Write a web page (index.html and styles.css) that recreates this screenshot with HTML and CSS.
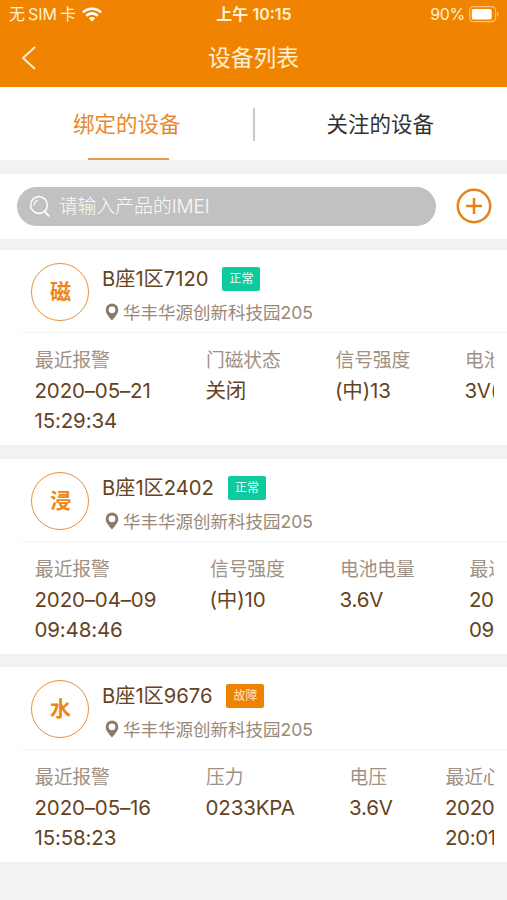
FILE: index.html
```html
<!DOCTYPE html>
<html lang="zh-CN">
<head>
<meta charset="utf-8">
<title>设备列表</title>
<link rel="stylesheet" href="styles.css">
</head>
<body>
<svg class="defs" width="0" height="0"><symbol id="pin" viewBox="0 0 14 18"><path fill-rule="evenodd" d="M7 .5a6.3 6.3 0 0 0-6.3 6.3C.7 11 4.2 14 7 17.5 9.800 14 13.300 11 13.300 6.800A6.300 6.300 0 0 0 7 .5zm0 2.900a3.400 3.400 0 1 1 0 6.800 3.400 3.400 0 0 1 0-6.800z"/></symbol></svg>
<header class="header">
  <div class="status">
    <div class="carrier"><span class="carrier-name">无<span class="sim">SIM</span>卡</span>
      <svg class="wifi" width="20" height="15" viewBox="0 0 20 15"><g fill="none" stroke="currentColor" stroke-width="2.700"><path d="M1 5.400C6 .5 14 .5 19 5.400"/><path d="M4.300 8.700c3.300-3 8.100-3 11.400 0"/></g><path fill="currentColor" d="M6.800 11.200c1.900-1.600 4.500-1.600 6.400 0L10 14.400z"/></svg>
    </div>
    <div class="time">上午<span>10:15</span></div>
    <div class="power"><span>90%</span>
      <svg width="30" height="17" viewBox="0 0 33 17" preserveAspectRatio="none"><rect x=".7" y=".7" width="28.600" height="15" rx="4.200" fill="none" stroke="#f9c27d" stroke-width="1.200"/><rect x="3" y="3" width="22" height="10.500" rx="2" fill="#fff"/><path d="M31 5.700v5c2-.8 2-4.200 0-5z" fill="#f9c27d"/></svg>
    </div>
  </div>
  <div class="nav">
    <svg class="back" width="16" height="24" viewBox="0 0 16 24"><path d="M14 1 2 12l12 11" fill="none" stroke="currentColor" stroke-width="1.900"/></svg>
    <h1>设备列表</h1>
  </div>
</header>
<nav class="tabs">
  <a class="tab active">绑定的设备</a>
  <a class="tab">关注的设备</a>
</nav>
<section class="search">
  <div class="field">
    <svg width="22" height="23" viewBox="0 0 22 23" fill="none" stroke="currentColor" stroke-width="1.600"><circle cx="10" cy="10" r="8.400"/><path d="m15.800 16.400 4.200 5" stroke-width="2"/><path d="M5 10.500A5.500 5.500 0 0 1 9 5.300" stroke-width="1.200"/></svg>
    <span>请输入产品的IMEI</span>
  </div>
  <svg class="add" width="36" height="36" viewBox="0 0 36 36" fill="none" stroke="currentColor" stroke-width="2.500"><circle cx="18" cy="18" r="16.200"/><path d="M10 18h16M18 10v16"/></svg>
</section>
<main class="list">
  <article class="card magnet">
    <div class="top">
      <div class="avatar">磁</div>
      <div class="info">
        <div class="name"><span>B座1区7120</span><b class="tag">正常</b></div>
        <div class="addr"><svg width="14" height="18"><use href="#pin"/></svg><span>华丰华源创新科技园205</span></div>
      </div>
    </div>
    <div class="stats">
      <dl><dt>最近报警</dt><dd>2020–05–21<br>15:29:34</dd></dl>
      <dl><dt>门磁状态</dt><dd>关闭</dd></dl>
      <dl><dt>信号强度</dt><dd>(中)13</dd></dl>
      <dl><dt>电池</dt><dd>3V(</dd></dl>
    </div>
  </article>
  <article class="card flood">
    <div class="top">
      <div class="avatar">浸</div>
      <div class="info">
        <div class="name"><span>B座1区2402</span><b class="tag">正常</b></div>
        <div class="addr"><svg width="14" height="18"><use href="#pin"/></svg><span>华丰华源创新科技园205</span></div>
      </div>
    </div>
    <div class="stats">
      <dl><dt>最近报警</dt><dd>2020–04–09<br>09:48:46</dd></dl>
      <dl><dt>信号强度</dt><dd>(中)10</dd></dl>
      <dl><dt>电池电量</dt><dd>3.6V</dd></dl>
      <dl><dt>最近</dt><dd>20<br>09</dd></dl>
    </div>
  </article>
  <article class="card water">
    <div class="top">
      <div class="avatar">水</div>
      <div class="info">
        <div class="name"><span>B座1区9676</span><b class="tag fault">故障</b></div>
        <div class="addr"><svg width="14" height="18"><use href="#pin"/></svg><span>华丰华源创新科技园205</span></div>
      </div>
    </div>
    <div class="stats">
      <dl><dt>最近报警</dt><dd>2020–05–16<br>15:58:23</dd></dl>
      <dl><dt>压力</dt><dd>0233KPA</dd></dl>
      <dl><dt>电压</dt><dd>3.6V</dd></dl>
      <dl><dt>最近心</dt><dd>2020<br>20:01</dd></dl>
    </div>
  </article>
</main>
</body>
</html>
```
FILE: styles.css
```css
* { box-sizing: border-box; margin: 0; padding: 0; }
body { width: 507px; height: 900px; overflow: hidden; background: #f2f2f2; font-family: Inter, "Noto Sans CJK SC", sans-serif; }
svg { display: block; flex: none; }
.defs { position: absolute; }
.header { height: 87px; background: #f08400; color: #fff0d2; }
.status { height: 29px; display: grid; grid-template-columns: 1fr auto 1fr; align-items: center; padding: 0 8px 0 9px; font-size: 16px; line-height: 29px; white-space: nowrap; }
.carrier { display: flex; align-items: center; gap: 6px; }
.carrier svg, .power svg { margin-top: -1px; }
.sim { margin: 0 3px; }
.wifi { color: #fff; }
.time { font-weight: 600; font-size: 16px; }
.time span { margin-left: 4px; }
.power { display: flex; justify-content: flex-end; align-items: center; gap: 4px; letter-spacing: -.3px; }
.nav { height: 57px; display: grid; grid-template-columns: 1fr auto 1fr; align-items: center; padding: 0 0 0 21px; }
.nav h1 { margin-left: -21px; font-size: 22.800px; font-weight: 400; line-height: 57px; }
.tabs { height: 73px; display: grid; grid-template-columns: 1fr 1fr; background: #fff; }
.tab { display: flex; justify-content: center; position: relative; height: 73px; font-size: 21.500px; line-height: 75px; color: #333; }
.tab.active { color: #e58a2c; }
.tab.active::before { content: ""; position: absolute; right: -1px; top: 21px; width: 1.500px; height: 33px; background: #c9c9c9; }
.tab.active::after { content: ""; position: absolute; left: 88px; bottom: 0; width: 81px; height: 2px; background: #e79a4b; }
.search { height: 65px; margin: 14px 0 11px; padding: 0 15px 1px 17px; background: #fff; display: flex; align-items: center; justify-content: space-between; }
.field { width: 419px; height: 39px; border-radius: 20px; background: #c1c1c1; color: #fafafa; display: flex; align-items: center; gap: 8px; padding-left: 12px; font-size: 18.800px; }
.field span { line-height: 40px; height: 39px; font-weight: 300; }
.add { color: #e38419; }
.list { display: grid; gap: 13.500px; }
.card { height: 195px; background: #fff; }
.top { height: 83px; margin-left: 20px; padding-left: 11px; border-bottom: 1px solid #f5f5f5; display: flex; }
.avatar { width: 58px; height: 58px; margin-top: 13px; border: 1.500px solid #e89238; border-radius: 50%; color: #ed8616; font-size: 21px; font-weight: 700; line-height: 56px; text-align: center; padding-left: 1px; }
.info { margin-left: 13px; padding-top: 12px; }
.name { height: 34px; display: flex; align-items: center; gap: 14px; color: #65431f; font-size: 20.200px; line-height: 34px; }
.tag { width: 38px; height: 24px; border-radius: 2px; background: #0ecb9f; color: #edfff8; font-size: 12px; font-weight: 400; line-height: 24px; text-align: center; }
.tag.fault { background: #ef8200; color: #ffe8c6; }
.addr { height: 34px; margin-left: 3px; display: flex; align-items: center; gap: 4px; color: #998879; font-size: 17.500px; line-height: 34px; }
.addr svg { fill: #8c7a69; margin-top: -2px; }
.stats { margin: 0 13px 0 35px; padding-top: 13px; display: grid; overflow: hidden; white-space: nowrap; }
.magnet .stats { grid-template-columns: 171px 129.500px 129.500px 29px; }
.flood .stats { grid-template-columns: 175px 130px 129.500px 24.500px; }
.water .stats { grid-template-columns: 171px 143.500px 96px 48.500px; }
dl { min-width: 0; }
dt { height: 30px; font-size: 18.800px; line-height: 29px; letter-spacing: -.1px; color: #a09083; }
dd { font-size: 20.500px; line-height: 30px; letter-spacing: -.15px; color: #65431f; margin-left: -.5px; }
dl:last-child dd { letter-spacing: -.4px; }
```
